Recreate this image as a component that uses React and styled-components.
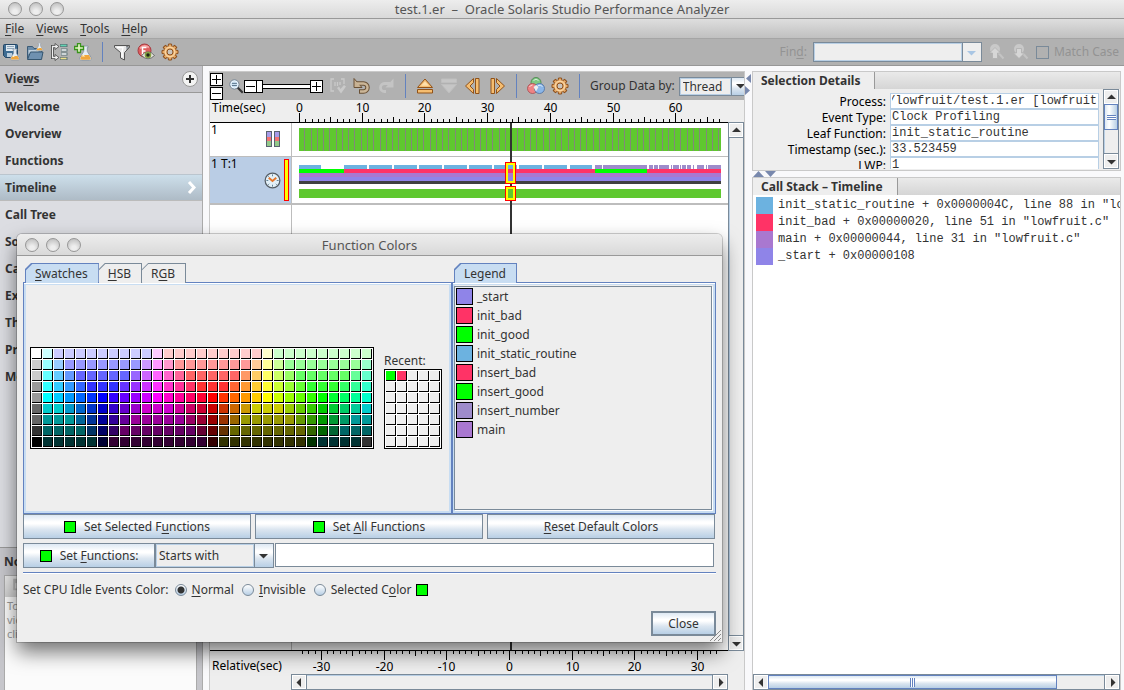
import React, { useEffect, useRef } from 'react';
import styled, { createGlobalStyle, css } from 'styled-components';

const sans = '"Noto Sans", "Open Sans", sans-serif';
const mono = '"Liberation Mono", monospace';

const metal = 'linear-gradient(#dde8f3 0%, #ffffff 30%, #ffffff 38%, #dce6f0 62%, #b8cfe5 100%)';
const edge = '#7a8a99';
const blue = '#6382bf';
const paleBlue = '#b8cfe5';
const tabBlue = '#c8ddf2';

const GlobalStyle = createGlobalStyle`
  *, *::before, *::after {
    box-sizing: border-box;
  }

  body {
    margin: 0;
    background: #f9f9fb;
    color: #333;
    font: 12px/16px ${sans};
  }

  button, input, select {
    font: inherit;
    color: inherit;
    margin: 0;
    padding: 0;
    border-radius: 0;
  }

  u {
    text-underline-offset: 2px;
    text-decoration-thickness: 1px;
    text-decoration-skip-ink: none;
  }

  svg {
    display: block;
    flex: none;
  }
`;

/* ---------- data ---------- */

const views = [
  'Welcome',
  'Overview',
  'Functions',
  'Timeline',
  'Call Tree',
  'Source',
  'Callers',
  'Experiments',
  'Threads',
  'Processes',
  'More',
];

const details = [
  ['Process:', 's/lowfruit/test.1.er [lowfruit'],
  ['Event Type:', 'Clock Profiling'],
  ['Leaf Function:', 'init_static_routine'],
  ['Timestamp (sec.):', '33.523459'],
  ['LWP:', '1'],
];

const callStack = [
  ['#6cb2e0', 'init_static_routine + 0x0000004C, line 88 in "lowfruit.c"'],
  ['#ff3366', 'init_bad + 0x00000020, line 51 in "lowfruit.c"'],
  ['#a978d0', 'main + 0x00000044, line 31 in "lowfruit.c"'],
  ['#8f84e8', '_start + 0x00000108'],
];

const legend = [
  ['#8f84e8', '_start'],
  ['#ff3366', 'init_bad'],
  ['#00ff00', 'init_good'],
  ['#6cb2e0', 'init_static_routine'],
  ['#ff3366', 'insert_bad'],
  ['#00ff00', 'insert_good'],
  ['#9e8ccb', 'insert_number'],
  ['#a978d0', 'main'],
];

// each entry is a short hex colour, "*n" repeats it n times
const palette = [
  'fff cff ccf*9 fcf fcc*9 ffc cfc*9',
  'ccc 9ff 9cf 99f*7 c9f f9f f9c f99*7 fc9 ff9 cf9 9f9*7 9fc',
  'ccc 6ff 6cf 69f 66f*5 96f c6f f6f f6c f69 f66*5 f96 fc6 ff6 cf6 9f6 6f6*5 6f9 6fc',
  '999 3ff 3cf 39f 36f 33f*3 63f 93f c3f f3f f3c f39 f36 f33*3 f63 f93 fc3 ff3 cf3 9f3 6f3 3f3*3 3f6 3f9 3fc',
  '999 0ff 0cf 09f 06f 03f 00f 30f 60f 90f c0f f0f f0c f09 f06 f03 f00 f30 f60 f90 fc0 ff0 cf0 9f0 6f0 3f0 0f0 0f3 0f6 0f9 0fc',
  '666 0cc*2 09c 06c 03c 00c 30c 60c 90c c0c*3 c09 c06 c03 c00 c30 c60 c90 cc0*3 9c0 6c0 3c0 0c0 0c3 0c6 0c9 0cc',
  '666 099*3 069 039 009 309 609 909*5 906 903 900 930 960 990*5 690 390 090 093 096 099*2',
  '333 066*4 036 006 306 606*7 603 600 630 660*7 360 060 063 066*3',
  '000 033*5 003 303*9 300 330*8 030 033*4 333',
].flatMap((row) =>
  row.split(' ').flatMap((entry) => {
    const [color, count = 1] = entry.split('*');
    return Array(Number(count)).fill(`#${color}`);
  })
);

const recent = ['#0f0', '#f36', ...Array(33).fill('#eee')];

const leafCalls = [
  ['#6cb2e0', [[0, 22], [45, 68], [70, 93], [95, 118], [120, 143], [145, 168], [170, 193], [195, 218], [220, 243], [245, 268], [271, 293]]],
  ['#9e8ccb', [[296, 303], [304, 348], [350, 354], [355, 359], [360, 370], [372, 373], [374, 380], [381, 382], [383, 387], [388, 392], [394, 395], [398, 405], [407, 408], [409, 422]]],
];

const initCalls = [
  ['#0f0', 0, 45],
  ['#f36', 45, 296],
  ['#0f0', 296, 348],
  ['#f36', 348, 422],
];

/* ---------- icons ---------- */

const Icon = ({ size = 18, children }) => (
  <svg width={size} height={size} viewBox='0 0 18 18' aria-hidden='true'>
    {children}
  </svg>
);

const Flask = () => (
  <>
    <path d='M3 0h4v1.200h-.6v3L9.400 9c.5 1.200-.2 2-1.400 2H2C.8 11 .1 10.200.6 9l3-4.800v-3H3z' fill='#e4edf5' stroke='#8b96a3' strokeWidth='.7' />
    <path d='M2.300 7h5.400l1.200 2.200c.3.800-.2 1.300-1 1.300H2.100c-.8 0-1.300-.5-1-1.300z' fill='#f0a63c' />
    <path d='M3.200 6.300L2.200 8h2.600z' fill='#fff1c9' />
  </>
);

const SaveIcon = () => (
  <Icon>
    <path d='M1.500 2.500q0-1 1-1h12q1 0 1 1v12h-12l-2-2z' fill='#3e6c92' stroke='#244766' />
    <path d='M4 2h9v6H4z' fill='#dfe9f1' />
    <path d='M5 3.500h7M5 5.500h7' stroke='#8ea6ba' />
    <path d='M5 10h5v4H5z' fill='#b9cddd' />
    <g transform='translate(8 6)'>
      <Flask />
    </g>
  </Icon>
);

const OpenIcon = () => (
  <Icon>
    <path d='M1.500 15.500v-12h5l1.500 2h7.500v10z' fill='#6c8ca8' stroke='#3b5b77' />
    <path d='M2.500 7h10v4h-10z' fill='#c0d0dd' />
    <path d='M4.500 9h12.500l-1.500 7.500H1.500z' fill='#6f91b0' stroke='#34556f' />
    <g transform='translate(10 0) scale(.7)'>
      <Flask />
    </g>
  </Icon>
);

const CompareIcon = () => (
  <Icon>
    <path d='M7 3.500H2.500v11H7' fill='none' stroke='#444' strokeWidth='3' />
    <path d='M5 .5l4 3-4 3zM5 11.500l4 3-4 3z' fill='#eee' stroke='#444' strokeWidth='.8' />
    <path d='M6.500 3.500h-4v11h4' fill='none' stroke='#eee' strokeWidth='1.300' />
    <path d='M10 2.500h7.500M11 7h6.500M11 11h6.500M10 15.500h7.500' stroke='#5a7377' strokeWidth='3' />
    <path d='M10.500 2.500h6' stroke='#62d4b2' strokeWidth='1.600' />
    <path d='M11.500 7h5M11.500 11h5' stroke='#f4f6f7' strokeWidth='1.400' />
    <path d='M10.500 15.500h6' stroke='#f0e08b' strokeWidth='1.600' />
  </Icon>
);

const AddFlaskIcon = () => (
  <Icon>
    <g transform='translate(5 3) scale(1.300)'>
      <Flask />
    </g>
    <path d='M3.500.5h3v3h3v3h-3v3h-3v-3h-3v-3h3z' fill='#e5f7c5' stroke='#39931b' strokeWidth='1.300' />
  </Icon>
);

const FilterIcon = () => (
  <Icon>
    <path d='M1.500 2.500h15v2L11.500 9.500V17l-4-2V9.500l-6-5z' fill='#e7e7e7' stroke='#555' />
    <path d='M13 3l3.500 1.200-3 2.500' fill='#9ba3ab' stroke='#666' strokeWidth='.8' />
    <path d='M4 4.500h6L9 9v5' fill='none' stroke='#fff' strokeWidth='1.300' />
  </Icon>
);

const EyeIcon = () => (
  <Icon>
    <circle cx='7.500' cy='7.500' r='6.500' fill='#df5f5f' stroke='#a83a40' />
    <path d='M3 5.500Q7 1 12 4.500' stroke='#f4a4a4' strokeWidth='2' fill='none' />
    <path d='M5.500 12V4.500h4M5.500 8h3' stroke='#fff' strokeWidth='1.500' fill='none' />
    <path d='M4.500 12.500q6.500-7.500 13 0-6.500 6.500-13 0z' fill='#e8e8df' stroke='#555' strokeWidth='.8' />
    <circle cx='11' cy='12' r='3.300' fill='#85a044' />
    <circle cx='11' cy='12' r='1.700' fill='#202717' />
  </Icon>
);

const GearIcon = () => (
  <Icon>
    {[0, 45, 90, 135, 180, 225, 270, 315].map((angle) => (
      <path key={angle} d='M7 4l.5-3h3l.5 3z' fill='#e9ac68' stroke='#8c4f1d' transform={`rotate(${angle} 9 9)`} />
    ))}
    <circle cx='9' cy='9' r='6' fill='#eeb777' />
    <circle cx='9' cy='9' r='4.800' fill='none' stroke='#fbdcae' />
    <circle cx='9' cy='9' r='3' fill='#c9c4bd' stroke='#8c4f1d' />
  </Icon>
);

const FindIcon = ({ down }) => (
  <Icon>
    <circle cx='7' cy='6' r='5' fill='#c9c9c9' />
    <path d='M10.500 10l5 5.500' stroke='#c4c4c4' strokeWidth='2' />
    <path
      d={down ? 'M4.500 5.500h5V10h3L7 15.500 1.500 10h3z' : 'M4.500 15.500V10h-3L7 4.500 12.500 10h-3v5.500z'}
      fill='#d6d6d6'
      stroke='#b0b0b0'
      strokeWidth='.8'
    />
  </Icon>
);

const ZoomIcon = () => (
  <Icon size={15}>
    <path d='M10 10l6.500 6.500' stroke='#333' strokeWidth='2.600' />
    <circle cx='6.500' cy='6.500' r='5.500' fill='#c9e0f1' stroke='#657686' />
    <circle cx='6.500' cy='6.500' r='4.300' fill='none' stroke='#f5faff' />
    <path d='M3.500 5.300h6M3.500 7.800h6' stroke='#4a647b' />
  </Icon>
);

const RangeIcon = () => (
  <Icon>
    <path d='M5 2H2v12h3M12 2h3v5M6 5v4m2.500-4v4M11 5v3' fill='none' stroke='#cacaca' strokeWidth='1.300' />
    <path d='M8 11l4 5.500 5-7-2-1.500-3.500 4-1.500-2.500z' fill='#cacaca' />
  </Icon>
);

const UndoIcon = () => (
  <Icon>
    <path d='M4 6.500h6.500a4 4 0 0 1 0 8H6' fill='none' stroke='#6a5136' strokeWidth='4.500' />
    <path d='M1 1.500v9h8z' fill='#c7b193' stroke='#6a5136' />
    <path d='M4 6.500h6.500a4 4 0 0 1 0 8H7' fill='none' stroke='#cbb698' strokeWidth='2.500' />
  </Icon>
);

const RedoIcon = () => (
  <Icon>
    <path d='M13 6.500H7.500a4 4 0 0 0 0 8h1.500' fill='none' stroke='#c4c4c4' strokeWidth='2.800' />
    <path d='M16.500 1.500v9h-8z' fill='#c4c4c4' />
  </Icon>
);

const StepIcon = ({ turn = 0, off }) => (
  <Icon>
    <g
      transform={`rotate(${turn} 9 9)`}
      fill={off ? '#c6c6c6' : '#f5bd70'}
      stroke={off ? '#bfbfbf' : '#915219'}
    >
      <path d='M1.500 10.500L9 2l7.500 8.500z' />
      <path d='M1.500 12.500h15v3.500h-15z' />
      {!off && <path d='M5 8.800L9 4.500l4 4.300z' fill='#fee0ac' stroke='none' />}
    </g>
  </Icon>
);

const SideStepIcon = ({ flip }) => (
  <Icon>
    <g transform={flip ? 'matrix(-1 0 0 1 18 0)' : undefined} fill='#f5bd70' stroke='#915219'>
      <path d='M9.500 1.500v4L6 9l3.500 3.500v4L1.500 9z' />
      <path d='M11.500 1.500H15v15h-3.500z' />
    </g>
  </Icon>
);

const VennIcon = () => (
  <Icon>
    <circle cx='9' cy='5.500' r='5' fill='#7fc884' stroke='#458048' strokeWidth='.8' />
    <circle cx='5.500' cy='11.500' r='5' fill='#ee8384' stroke='#a54c51' strokeWidth='.8' />
    <circle cx='12.500' cy='11.500' r='5' fill='#8bb6e8' stroke='#4c6f9f' strokeWidth='.8' />
    <path d='M9 8l2.500 2L9 14.500 6.500 10z' fill='#eee' />
    <path d='M6.500 3.500Q9 .8 11.500 3.500M2.500 10q1-2 3-2M11 8.500q3-.8 4.500 1' stroke='#fff' fill='none' opacity='.7' />
  </Icon>
);

const StateBars = () => (
  <svg width='15' height='17' aria-hidden='true'>
    {[0.5, 8.5].map((x) => (
      <g key={x}>
        <path d={`M${x} 1h5v5h-5z`} fill='#a79be8' />
        <path d={`M${x} 6h5v4h-5z`} fill='#f47272' />
        <path d={`M${x} 10h5v5h-5z`} fill='#93c98a' />
        <rect x={x} y='.5' width='5' height='15' fill='none' stroke='#596370' />
      </g>
    ))}
  </svg>
);

const ClockIcon = () => (
  <Icon size={17}>
    <circle cx='9' cy='9' r='7.800' fill='#e3f0f8' stroke='#555d65' strokeWidth='1.300' />
    <path d='M9 2.500v2M9 13.500v2M2.500 9h2M13.500 9h2M4.500 4.500l1 1M12.500 12.500l1 1M4.500 13.500l1-1' stroke='#5c7d92' />
    <path d='M5 6l4 3.500L13 6' fill='none' stroke='#e5762b' strokeWidth='2' />
  </Icon>
);

const NoteIcon = () => (
  <Icon size={16}>
    <path d='M7 3h6l2 3h3v10H7z' fill='#b6b6b6' />
    <path d='M9 8h8v6H9z' fill='#d6d6d6' />
  </Icon>
);

const Arrow = ({ to = 'down', color = '#333' }) => {
  const paths = {
    down: 'M0 3h9L4.500 7.500z',
    up: 'M0 6h9L4.500 1.500z',
    left: 'M6 0v9L1.500 4.500z',
    right: 'M3 0v9l4.500-4.500z',
  };
  return (
    <svg width='9' height='9' aria-hidden='true'>
      <path d={paths[to]} fill={color} />
    </svg>
  );
};

/* ---------- window frame ---------- */

const Window = styled.div`
  position: relative;
  display: flex;
  flex-direction: column;
  min-height: 100vh;
  overflow: hidden;
`;

const TitleBar = styled.header`
  display: flex;
  align-items: center;
  height: ${(p) => (p.$tall ? 22 : 19)}px;
  padding: 0 8px;
  background: linear-gradient(#ededed, #d9d9d9);
  border-bottom: 1px solid #999;
`;

const Lights = styled.div`
  display: flex;
  flex: 1;
  gap: 7px;
`;

const Light = styled.button`
  width: 14px;
  height: 14px;
  border: 1px solid #979797;
  border-radius: 50%;
  background: radial-gradient(circle at 50% 75%, #eee 20%, #bdbdbd 90%);
`;

const Title = styled.h1`
  margin: 0;
  color: #555;
  font-size: 13px;
  font-weight: normal;
  line-height: 16px;
  white-space: pre;
`;

const Spacer = styled.div`
  flex: 1;
`;

const MenuBar = styled.nav`
  display: flex;
  align-items: center;
  gap: 12px;
  height: 19px;
  padding: 0 5px;
  background: linear-gradient(#dedede, #c0c0c0);
`;

const MenuButton = styled.button`
  border: 0;
  background: none;
`;

const ToolBar = styled.div`
  display: flex;
  align-items: center;
  gap: 6px;
  height: 28px;
  padding: 0 5px 0 2px;
  background: #b1b1b1;
  border-top: 1px solid #a5a5a5;
  border-bottom: 1px solid #979797;
`;

const IconButton = styled.button`
  display: flex;
  flex: none;
  border: 0;
  background: none;
`;

const Separator = styled.div`
  flex: none;
  width: 1px;
  height: ${(p) => p.$height || 20}px;
  margin: 0 4px;
  background: ${blue};
`;

const FindLabel = styled.label`
  color: #939393;
`;

const FindBox = styled.div`
  display: flex;
  width: 169px;
  height: 20px;
  border: 1px solid ${edge};

  input {
    flex: 1;
    min-width: 0;
    border: 1px solid ${paleBlue};
    background: #eee;
  }
`;

const DropButton = styled.button`
  display: flex;
  align-items: center;
  justify-content: center;
  width: 19px;
  border: 0;
  border-left: 1px solid ${edge};
  background: #eee;
`;

const MatchCase = styled.label`
  display: flex;
  align-items: center;
  gap: 5px;
  color: #939393;

  input {
    appearance: none;
    width: 13px;
    height: 13px;
    border: 1px solid ${edge};
  }
`;

const Main = styled.main`
  display: flex;
  flex: 1;
`;

/* ---------- sidebar ---------- */

const SideBar = styled.aside`
  display: flex;
  flex: none;
  flex-direction: column;
  width: 203px;
  background: #dcdde2;
  border-right: 1px solid #ababab;
`;

const SideHeader = styled.div`
  display: flex;
  align-items: center;
  justify-content: space-between;
  height: 27px;
  padding: 0 4px 0 5px;
  background: #c6c6cb;
  border-bottom: 1px solid #999;
  font-weight: bold;
`;

const AddButton = styled.button`
  display: flex;
  align-items: center;
  justify-content: center;
  width: 16px;
  height: 16px;
  border: 1px solid #999;
  border-radius: 50%;
  background: #f3f3f3;
`;

const ViewLink = styled.a`
  display: flex;
  align-items: center;
  justify-content: space-between;
  height: 27px;
  padding: 0 5px;
  color: #333;
  font-weight: bold;
  text-decoration: none;
  ${(p) =>
    p.$active &&
    css`
      background: linear-gradient(#cddfeb, #aebbc6);
      border-top: 1px solid #bbc5ce;
      border-bottom: 1px solid #bbb;
    `}
`;

const Notes = styled.section`
  display: flex;
  flex-direction: column;
  height: 143px;
  margin-top: auto;
  padding: 0 5px 0 4px;
  background: #c6c6cb;
  border-top: 1px solid #999;

  h2 {
    margin: 0;
    font-size: 12px;
    line-height: 27px;
  }
`;

const NotesBox = styled.div`
  flex: 1;
  background: #fbfbfb;
  border: 1px solid #aaa;
  border-bottom: 0;
  color: #999;
  font-size: 11px;
  line-height: 14px;

  p {
    margin: 0;
    padding: 2px;
  }
`;

const NotesBar = styled.div`
  padding: 0 2px;
  height: 21px;
  background: linear-gradient(#e9e9e9, #cfcfcf);
`;

/* ---------- timeline ---------- */

const Timeline = styled.section`
  display: flex;
  flex: 1;
  flex-direction: column;
  min-width: 0;
  margin: 5px 0 0 6px;
  overflow: hidden;
  background: #eee;
  border: solid #c9c9c9;
  border-width: 1px 1px 0;
`;

const TimelineBar = styled.div`
  display: flex;
  align-items: center;
  gap: 6px;
  height: 28px;
  background: #b1b1b1;
  white-space: nowrap;
`;

const Stepper = styled.div`
  display: flex;
  flex-direction: column;
  gap: 1px;
`;

const SquareButton = styled.button`
  display: flex;
  flex: none;
  align-items: center;
  justify-content: center;
  width: 13px;
  height: 13px;
  border: 1px solid #000;
  background: #fff;
`;

const ZoomGroup = styled.div`
  display: flex;
  align-items: center;
`;

const ZoomSlider = styled.input`
  appearance: none;
  width: 53px;
  height: 13px;
  background: linear-gradient(#000, #000) 0 4px / 100% 1px no-repeat,
    linear-gradient(#000, #000) 0 8px / 100% 1px no-repeat,
    linear-gradient(#fff, #fff) 0 5px / 100% 3px no-repeat;

  &::-webkit-slider-thumb {
    appearance: none;
    width: 6px;
    height: 13px;
    border: 1px solid #000;
    border-left: 0;
    background: #fff;
  }
`;

const GroupBy = styled.label`
  display: flex;
  flex: none;
  align-items: center;
  gap: 4px;
`;

const SelectWrap = styled.span`
  position: relative;
  display: flex;
  flex: none;
  width: ${(p) => p.$width}px;
  height: ${(p) => p.$height}px;
  border: 1px solid ${edge};
  background: linear-gradient(90deg, ${edge}, ${edge}) calc(100% - 18px) 0 / 1px 100% no-repeat, ${metal};

  select {
    appearance: none;
    width: calc(100% - 19px);
    padding: 0 2px;
    border: 1px solid ${paleBlue};
    background: #eee;
  }

  svg {
    position: absolute;
    right: 5px;
    top: 50%;
    margin-top: -5px;
    pointer-events: none;
  }
`;

const RulerRow = styled.div`
  display: flex;
  height: ${(p) => (p.$below ? 23 : 22)}px;
  color: #000;

  > span {
    width: 82px;
    padding-left: 2px;
    padding-top: ${(p) => (p.$below ? 7 : 0)}px;
  }

  > svg {
    flex: 1;
    min-width: 0;
  }
`;

const Lanes = styled.div`
  display: flex;
  flex: 1;
`;

const Tracks = styled.div`
  position: relative;
  display: flex;
  flex: 1;
  flex-direction: column;
  min-width: 0;
  background: #fff;
  border-top: 1px solid #000;
  border-bottom: 1px solid #000;
`;

const Track = styled.div`
  display: flex;
  height: ${(p) => p.$height}px;
  border-bottom: ${(p) => p.$line}px solid #bdbdbd;
  color: #000;

  > svg {
    flex: 1;
    min-width: 0;
  }
`;

const TrackLabel = styled.div`
  display: flex;
  flex: none;
  align-items: center;
  width: 82px;
  padding: 0 ${(p) => (p.$active ? 2 : 10)}px 0 1px;
  border-right: 1px solid #bdbdbd;
  background: ${(p) => (p.$active ? '#bacde5' : '#fff')};

  span {
    flex: 1;
    align-self: flex-start;
    line-height: 14px;
  }
`;

const ActiveMark = styled.i`
  width: 5px;
  height: 42px;
  margin-left: 3px;
  border: 1px solid #f00;
  background: #ff0;
`;

const EmptyTrack = styled.div`
  flex: 1;
  width: 82px;
  border-right: 1px solid #bdbdbd;
`;

const Cursor = styled.div`
  position: absolute;
  top: 0;
  bottom: 0;
  left: 300px;
  width: 2px;
  background: #333;
`;

const CursorBox = styled.div`
  position: absolute;
  top: ${(p) => p.$top}px;
  left: 295px;
  width: 11px;
  height: ${(p) => p.$height}px;
  border: 1px solid #f00;
  box-shadow: inset 0 0 0 2px #ff0;
  background: ${(p) => p.$fill};
`;

/* ---------- scroll bars ---------- */

const Scroll = styled.div`
  display: flex;
  flex: none;
  flex-direction: ${(p) => (p.$across ? 'row' : 'column')};
  width: ${(p) => (p.$across ? 'auto' : '16px')};
  height: ${(p) => (p.$across ? '16px' : 'auto')};
  margin: ${(p) => (p.$inset ? '0 16px 0 81px' : 0)};
  background: #eee;
  border: 1px solid ${edge};
  box-shadow: inset 1px 1px ${paleBlue};
`;

const ScrollButton = styled.button`
  display: flex;
  flex: none;
  align-items: center;
  justify-content: center;
  width: 14px;
  height: 14px;
  border: 1px solid #fff;
  background: #eee;
  outline: 1px solid ${edge};
`;

const Thumb = styled.div`
  display: flex;
  flex: ${(p) => p.$size};
  align-items: center;
  justify-content: center;
  border: 1px solid ${blue};
  background: ${(p) => (p.$across ? metal : 'linear-gradient(90deg, #dde8f3, #fff 35%, #b8cfe5)')};

  &::after {
    content: '';
    width: ${(p) => (p.$across ? 5 : 9)}px;
    height: ${(p) => (p.$across ? 9 : 5)}px;
    background: repeating-linear-gradient(
      ${(p) => (p.$across ? '90deg' : '180deg')},
      ${blue} 0 1px,
      #fff 1px 2px
    );
  }
`;

const Groove = styled.div`
  flex: ${(p) => p.$size};
`;

const ScrollBar = ({ across, inset, thumb, rest = 1 }) => (
  <Scroll $across={across} $inset={inset}>
    <ScrollButton type='button' aria-label={across ? 'Scroll left' : 'Scroll up'}>
      <Arrow to={across ? 'left' : 'up'} />
    </ScrollButton>
    {thumb && <Thumb $size={thumb} $across={across} />}
    <Groove $size={rest} />
    <ScrollButton type='button' aria-label={across ? 'Scroll right' : 'Scroll down'}>
      <Arrow to={across ? 'right' : 'down'} />
    </ScrollButton>
  </Scroll>
);

/* ---------- right column ---------- */

const Handle = styled.div`
  display: flex;
  flex: none;
  flex-direction: ${(p) => (p.$across ? 'row' : 'column')};
  gap: ${(p) => (p.$across ? 1 : 3)}px;
  width: ${(p) => (p.$across ? 'auto' : '7px')};
  height: ${(p) => (p.$across ? '6px' : 'auto')};
  padding: ${(p) => (p.$across ? '0 1px' : '8px 0')};
  overflow: hidden;
`;

const HandleArrow = ({ d, w, h }) => (
  <svg width={w} height={h} aria-hidden='true'>
    <path d={d} fill='#7888ad' />
  </svg>
);

const SideColumn = styled.div`
  display: flex;
  flex: none;
  flex-direction: column;
  width: 369px;
  margin: 5px 3px 0 0;
`;

const Panel = styled.section`
  display: flex;
  flex: ${(p) => (p.$grow ? 1 : 'none')};
  flex-direction: column;
  height: ${(p) => (p.$grow ? 'auto' : '100px')};
  overflow: hidden;
  border: 1px solid #c9c9c9;
  border-bottom-width: ${(p) => (p.$grow ? 0 : 1)}px;
  background: ${(p) => (p.$grow ? '#fff' : '#eee')};
`;

const PanelHead = styled.div`
  display: flex;
  flex: none;
  height: 17px;
  background: linear-gradient(#eaeaea, #d5d5d5);

  h2 {
    margin: 0;
    padding: 0 14px 0 8px;
    border-right: 1px solid #999;
    background: #eee;
    font-size: 12px;
    line-height: 18px;
    white-space: pre;
  }
`;

const DetailsBody = styled.div`
  display: flex;
  flex: 1;
  gap: 4px;
  min-height: 0;
  padding: 0 1px 1px 0;
`;

const DetailsGrid = styled.div`
  display: grid;
  flex: 1;
  grid-template-columns: 133px 1fr;
  grid-auto-rows: 16px;
  column-gap: 4px;
  padding-top: 4px;
  overflow: hidden;
  color: #000;
  text-align: right;

  label {
    line-height: 18px;
  }

  input {
    min-width: 0;
    padding: 0 1px;
    border: 1px solid ${paleBlue};
    background: #fff;
    color: #333;
    font: 12px/14px ${mono};
  }
`;

const StackList = styled.ul`
  flex: 1;
  margin: 0;
  padding: 2px 0 0 3px;
  list-style: none;
  font: 12px/17px ${mono};
  white-space: pre;

  li {
    display: flex;
    gap: 5px;
  }
`;

const StackColor = styled.i`
  flex: none;
  width: 17px;
  height: 17px;
  background: ${(p) => p.$color};
`;

/* ---------- function colors dialog ---------- */

const Dialog = styled.div`
  position: absolute;
  top: 234px;
  left: 17px;
  width: 705px;
  background: #eee;
  border-radius: 5px 5px 0 0;
  box-shadow: 0 0 0 1px rgba(0, 0, 0, 0.18), 0 10px 20px rgba(0, 0, 0, 0.55);

  ${TitleBar} {
    border-radius: 5px 5px 0 0;
  }
`;

const DialogBody = styled.div`
  display: flex;
  flex-direction: column;
  gap: 4px;
  padding: 7px 6px 6px;
`;

const Panes = styled.div`
  display: flex;
  margin-bottom: -4px;
`;

const PaneColumn = styled.div`
  display: flex;
  flex: ${(p) => (p.$grow ? 1 : 'none')};
  flex-direction: column;
  min-width: 0;
`;

const TabList = styled.div`
  display: flex;
  padding-left: 2px;
  height: 19px;
`;

const Tab = styled.button`
  height: 20px;
  padding: 0 10px 0 9px;
  border: 1px solid ${(p) => (p.$active ? blue : edge)};
  border-bottom: 0;
  border-left-width: ${(p) => (p.$active ? 1 : 0)}px;
  clip-path: polygon(0 6px, 6px 0, 100% 0, 100% 100%, 0 100%);
  background: linear-gradient(
    135deg,
    ${(p) => (p.$active ? blue : edge)} 0 4px,
    ${(p) => (p.$active ? tabBlue : '#eee')} 5px
  );
  z-index: ${(p) => (p.$active ? 1 : 0)};
`;

const Pane = styled.div`
  display: flex;
  flex: 1;
  min-height: 232px;
  align-items: center;
  padding: 4px;
  border: 1px solid ${blue};
  box-shadow: inset 0 1px #fff, inset 0 0 0 2px ${tabBlue};
`;

const LegendPane = styled(Pane)`
  width: 264px;
  padding: 1px 1px 1px 0;
`;

const SwatchArea = styled.div`
  display: flex;
  flex: 1;
  align-items: flex-end;
  justify-content: space-between;
  padding: 0 5px 0 2px;
`;

const SwatchGrid = styled.div`
  display: grid;
  grid-template-columns: repeat(${(p) => p.$columns}, 10px);
  grid-auto-rows: 10px;
  gap: 1px;
  padding: 1px;
  border: 1px solid #000;
  background: #fff;
`;

const Swatch = styled.button`
  border: solid #000;
  border-width: 0 1px 1px 0;
  background: ${(p) => p.$color};
`;

const LegendList = styled.ul`
  flex: 1;
  align-self: stretch;
  margin: 2px 2px 2px 1px;
  padding: 0 1px;
  border: 1px solid ${edge};
  box-shadow: 1px 1px #fff;
  list-style: none;

  li {
    display: flex;
    align-items: center;
    gap: 4px;
    height: 19px;
  }
`;

const ColorBox = styled.i`
  flex: none;
  width: ${(p) => p.$size}px;
  height: ${(p) => p.$size}px;
  border: 1px solid #000;
  background: ${(p) => p.$color};
`;

const ButtonRow = styled.div`
  display: flex;
  gap: ${(p) => p.$gap}px;
  padding-right: 1px;
`;

const MetalButton = styled.button`
  display: flex;
  flex: ${(p) => (p.$width ? 'none' : 1)};
  align-items: center;
  justify-content: center;
  gap: 8px;
  width: ${(p) => (p.$width ? `${p.$width}px` : 'auto')};
  height: 25px;
  border: ${(p) => (p.$main ? 2 : 1)}px solid ${edge};
  background: ${metal};
`;

const NameInput = styled.input`
  flex: 1;
  min-width: 0;
  margin: 0 1px 1px 1px;
  padding: 0 3px;
  border: 1px solid ${edge};
  background: #fff;
`;

const IdleColors = styled.div`
  display: flex;
  align-items: center;
  gap: 8px;
  height: 35px;
  border-top: 1px solid ${blue};
  box-shadow: inset 0 1px #fff;

  > span {
    margin-right: -2px;
  }

  label {
    display: flex;
    align-items: center;
    gap: 5px;
  }

  input {
    appearance: none;
    width: 12px;
    height: 12px;
    border: 1px solid ${edge};
    border-radius: 50%;
    background: linear-gradient(#fff, ${paleBlue});
  }

  input:checked {
    background: radial-gradient(circle, #333 0 3px, transparent 4px), linear-gradient(#fff, ${paleBlue});
  }
`;

const DialogFooter = styled.div`
  display: flex;
  justify-content: flex-end;
`;

const Grip = styled.svg`
  position: absolute;
  right: 1px;
  bottom: 1px;
`;

/* ---------- parts ---------- */

const WindowBar = ({ title, tall }) => (
  <TitleBar $tall={tall}>
    <Lights>
      {['Close', 'Minimize', 'Zoom'].map((name) => (
        <Light key={name} type='button' aria-label={`${name} window`} />
      ))}
    </Lights>
    <Title>{title}</Title>
    <Spacer />
  </TitleBar>
);

const Plus = ({ minus }) => (
  <svg width='9' height='9' aria-hidden='true'>
    <path d={minus ? 'M0 4.500h9' : 'M0 4.500h9M4.500 0v9'} stroke='#000' />
  </svg>
);

// pixels per second on the time axis
const SECOND = 6.27;

const Ruler = ({ label, from, to, zero, below }) => {
  const height = below ? 23 : 22;
  const ticks = [];
  for (let s = from; s <= to; s += 1) ticks.push(s);
  return (
    <RulerRow $below={below}>
      <span>{label}</span>
      <svg width='100%' height={height} aria-hidden='true'>
        {ticks.map((s) => {
          const x = Math.round(zero + s * SECOND) + 0.5;
          const size = s % 10 === 0 ? 9 : s % 5 === 0 ? 5 : 3;
          return (
            <g key={s}>
              <path d={below ? `M${x} 0v${size}` : `M${x} ${height - size}v${size}`} stroke='#000' />
              {s % 10 === 0 && (
                <text x={x} y={below ? 20 : 12} textAnchor='middle' fontSize='12'>
                  {s}
                </text>
              )}
            </g>
          );
        })}
      </svg>
    </RulerRow>
  );
};

const TimelineTools = () => (
  <TimelineBar>
    <Stepper>
      <SquareButton type='button' aria-label='Taller rows'>
        <Plus />
      </SquareButton>
      <SquareButton type='button' aria-label='Shorter rows'>
        <Plus minus />
      </SquareButton>
    </Stepper>
    <ZoomGroup>
      <ZoomIcon />
      <SquareButton type='button' aria-label='Zoom out'>
        <Plus minus />
      </SquareButton>
      <ZoomSlider type='range' defaultValue='0' aria-label='Zoom' />
      <SquareButton type='button' aria-label='Zoom in'>
        <Plus />
      </SquareButton>
    </ZoomGroup>
    <IconButton type='button' aria-label='Zoom to range'><RangeIcon /></IconButton>
    <IconButton type='button' aria-label='Undo zoom'><UndoIcon /></IconButton>
    <IconButton type='button' aria-label='Redo zoom'><RedoIcon /></IconButton>
    <Separator $height={24} />
    <IconButton type='button' aria-label='Row up'><StepIcon /></IconButton>
    <IconButton type='button' aria-label='Row down'><StepIcon turn={180} off /></IconButton>
    <IconButton type='button' aria-label='Previous event'><SideStepIcon /></IconButton>
    <IconButton type='button' aria-label='Next event'><SideStepIcon flip /></IconButton>
    <Separator $height={24} />
    <IconButton type='button' aria-label='Function colors'><VennIcon /></IconButton>
    <IconButton type='button' aria-label='Timeline settings'><GearIcon /></IconButton>
    <Separator $height={24} />
    <GroupBy>
      Group Data by:
      <SelectWrap $width={72} $height={19}>
        <select defaultValue='Thread'>
          <option>Thread</option>
        </select>
        <Arrow />
      </SelectWrap>
    </GroupBy>
  </TimelineBar>
);

const TimelineView = () => (
  <Timeline>
    <TimelineTools />
    <Ruler label='Time(sec)' from={0} to={67} zero={7} />
    <Lanes>
      <Tracks>
        <Track $height={34} $line={1}>
          <TrackLabel>
            <span>1</span>
            <StateBars />
          </TrackLabel>
          <svg width='100%' height='33' aria-hidden='true'>
            <rect x='7' y='5' width='422' height='23' fill='#5fc82f' />
            {Array.from({ length: 67 }, (_, i) => (
              <rect key={i} x={Math.round(7 + (i + 1) * SECOND) - 1} y='5' width='1' height='23' fill='#83877b' />
            ))}
          </svg>
        </Track>
        <Track $height={48} $line={2}>
          <TrackLabel $active>
            <span>1 T:1</span>
            <ClockIcon />
            <ActiveMark />
          </TrackLabel>
          <svg width='100%' height='46' aria-hidden='true'>
            {leafCalls.map(([color, spans]) =>
              spans.map(([a, b]) => <rect key={a} x={7 + a} y='8' width={b - a} height='4' fill={color} />)
            )}
            {initCalls.map(([color, a, b]) => (
              <rect key={a} x={7 + a} y='12' width={b - a} height='4' fill={color} />
            ))}
            <rect x='7' y='16' width='422' height='4' fill='#a978d0' />
            <rect x='7' y='20' width='422' height='4' fill='#8f84e8' />
            <rect x='7' y='24' width='422' height='3' fill='#404040' />
            <rect x='7' y='32' width='422' height='9' fill='#5fc82f' />
          </svg>
        </Track>
        <EmptyTrack />
        <Cursor />
        <CursorBox
          $top={39}
          $height={22}
          $fill='linear-gradient(#6cb2e0 6px, #f36 6px 10px, #a978d0 10px 14px, #8f84e8 14px)'
        />
        <CursorBox $top={63} $height={15} $fill='#5fc82f' />
      </Tracks>
      <ScrollBar />
    </Lanes>
    <Ruler label='Relative(sec)' from={-33} to={33} zero={217} below />
    <ScrollBar across inset />
  </Timeline>
);

const DetailField = ({ label, value }) => {
  const ref = useRef(null);
  const id = label.replace(/\W/g, '').toLowerCase();

  // long paths show their end
  useEffect(() => {
    ref.current.scrollLeft = ref.current.scrollWidth;
  }, []);

  return (
    <>
      <label htmlFor={id}>{label}</label>
      <input id={id} ref={ref} readOnly value={value} />
    </>
  );
};

const FunctionColors = () => (
  <Dialog role='dialog' aria-label='Function Colors'>
    <WindowBar title='Function Colors' tall />
    <DialogBody>
      <Panes>
        <PaneColumn $grow>
          <TabList role='tablist'>
            <Tab type='button' role='tab' aria-selected='true' $active><u>S</u>watches</Tab>
            <Tab type='button' role='tab'><u>H</u>SB</Tab>
            <Tab type='button' role='tab'>R<u>G</u>B</Tab>
          </TabList>
          <Pane>
            <SwatchArea>
              <SwatchGrid $columns={31}>
                {palette.map((color, i) => (
                  <Swatch key={i} type='button' $color={color} aria-label={color} />
                ))}
              </SwatchGrid>
              <div>
                Recent:
                <SwatchGrid $columns={5}>
                  {recent.map((color, i) => (
                    <Swatch key={i} type='button' $color={color} aria-label={`Recent ${i + 1}`} />
                  ))}
                </SwatchGrid>
              </div>
            </SwatchArea>
          </Pane>
        </PaneColumn>
        <PaneColumn>
          <TabList role='tablist'>
            <Tab type='button' role='tab' aria-selected='true' $active>Legend</Tab>
          </TabList>
          <LegendPane>
            <LegendList>
              {legend.map(([color, name]) => (
                <li key={name}>
                  <ColorBox $size={17} $color={color} />
                  {name}
                </li>
              ))}
            </LegendList>
          </LegendPane>
        </PaneColumn>
      </Panes>
      <ButtonRow $gap={4}>
        <MetalButton type='button'>
          <ColorBox $size={12} $color='#0f0' />
          <span>Set Selected F<u>u</u>nctions</span>
        </MetalButton>
        <MetalButton type='button'>
          <ColorBox $size={12} $color='#0f0' />
          <span>Set <u>A</u>ll Functions</span>
        </MetalButton>
        <MetalButton type='button'>
          <span><u>R</u>eset Default Colors</span>
        </MetalButton>
      </ButtonRow>
      <ButtonRow $gap={0}>
        <MetalButton type='button' $width={132}>
          <ColorBox $size={12} $color='#0f0' />
          <span>Set <u>F</u>unctions:</span>
        </MetalButton>
        <SelectWrap $width={119} $height={25}>
          <select defaultValue='Starts with' aria-label='Match'>
            <option>Starts with</option>
          </select>
          <Arrow />
        </SelectWrap>
        <NameInput aria-label='Function name' />
      </ButtonRow>
      <IdleColors role='radiogroup' aria-labelledby='idle-label'>
        <span id='idle-label'>Set CPU Idle Events Color:</span>
        <label>
          <input type='radio' name='idle' defaultChecked />
          <span><u>N</u>ormal</span>
        </label>
        <label>
          <input type='radio' name='idle' />
          <span><u>I</u>nvisible</span>
        </label>
        <label>
          <input type='radio' name='idle' />
          <span>Selected C<u>o</u>lor</span>
          <ColorBox $size={12} $color='#0f0' />
        </label>
      </IdleColors>
      <DialogFooter>
        <MetalButton type='button' $width={65} $main>Close</MetalButton>
      </DialogFooter>
    </DialogBody>
    <Grip width='11' height='11' aria-hidden='true'>
      <path d='M0 11L11 0M4 11l7-7M8 11l3-3' stroke='#888' />
    </Grip>
  </Dialog>
);

const App = () => (
  <Window>
    <GlobalStyle />
    <WindowBar title='test.1.er  –  Oracle Solaris Studio Performance Analyzer' />
    <MenuBar>
      <MenuButton type='button'><u>F</u>ile</MenuButton>
      <MenuButton type='button'><u>V</u>iews</MenuButton>
      <MenuButton type='button'><u>T</u>ools</MenuButton>
      <MenuButton type='button'><u>H</u>elp</MenuButton>
    </MenuBar>
    <ToolBar>
      <IconButton type='button' aria-label='Profile application'><SaveIcon /></IconButton>
      <IconButton type='button' aria-label='Open experiment'><OpenIcon /></IconButton>
      <IconButton type='button' aria-label='Compare experiments'><CompareIcon /></IconButton>
      <IconButton type='button' aria-label='Add experiment'><AddFlaskIcon /></IconButton>
      <Separator />
      <IconButton type='button' aria-label='Filter'><FilterIcon /></IconButton>
      <IconButton type='button' aria-label='Show functions'><EyeIcon /></IconButton>
      <IconButton type='button' aria-label='Settings'><GearIcon /></IconButton>
      <Spacer />
      <FindLabel htmlFor='find'>Fin<u>d</u>:</FindLabel>
      <FindBox>
        <input id='find' disabled />
        <DropButton type='button' disabled aria-label='Find history'>
          <Arrow color='#a9c6e4' />
        </DropButton>
      </FindBox>
      <IconButton type='button' aria-label='Find previous'><FindIcon /></IconButton>
      <IconButton type='button' aria-label='Find next'><FindIcon down /></IconButton>
      <MatchCase>
        <input type='checkbox' disabled />
        Match Case
      </MatchCase>
    </ToolBar>
    <Main>
      <SideBar>
        <SideHeader>
          <span>Vie<u>w</u>s</span>
          <AddButton type='button' aria-label='Add view'>
            <svg width='8' height='8' aria-hidden='true'>
              <path d='M0 4h8M4 0v8' stroke='#333' strokeWidth='2' />
            </svg>
          </AddButton>
        </SideHeader>
        {views.map((name) => (
          <ViewLink key={name} href='#' $active={name === 'Timeline'}>
            {name}
            {name === 'Timeline' && (
              <svg width='10' height='13' aria-hidden='true'>
                <path d='M2 1l5 5.500L2 12' fill='none' stroke='#fff' strokeWidth='3' />
              </svg>
            )}
          </ViewLink>
        ))}
        <Notes>
          <h2>Notes</h2>
          <NotesBox>
            <NotesBar>
              <NoteIcon />
            </NotesBar>
            <p>
              To
              <br />
              view
              <br />
              click
            </p>
          </NotesBox>
        </Notes>
      </SideBar>
      <TimelineView />
      <Handle>
        <HandleArrow w={7} h={9} d='M6 0v9L1 4.500z' />
        <HandleArrow w={7} h={9} d='M0 0v9l5-4.500z' />
      </Handle>
      <SideColumn>
        <Panel>
          <PanelHead>
            <h2>Selection Details</h2>
          </PanelHead>
          <DetailsBody>
            <DetailsGrid>
              {details.map(([label, value]) => (
                <DetailField key={label} label={label} value={value} />
              ))}
            </DetailsGrid>
            <ScrollBar thumb={1} rest={1} />
          </DetailsBody>
        </Panel>
        <Handle $across>
          <HandleArrow w={11} h={6} d='M0 6h11L5.500 0z' />
          <HandleArrow w={11} h={6} d='M0 0h11L5.500 6z' />
        </Handle>
        <Panel $grow>
          <PanelHead>
            <h2>Call Stack – Timeline</h2>
          </PanelHead>
          <StackList>
            {callStack.map(([color, frame]) => (
              <li key={frame}>
                <StackColor $color={color} />
                {frame}
              </li>
            ))}
          </StackList>
          <ScrollBar across thumb={6} rest={1} />
        </Panel>
      </SideColumn>
    </Main>
    <FunctionColors />
  </Window>
);

export default App;
